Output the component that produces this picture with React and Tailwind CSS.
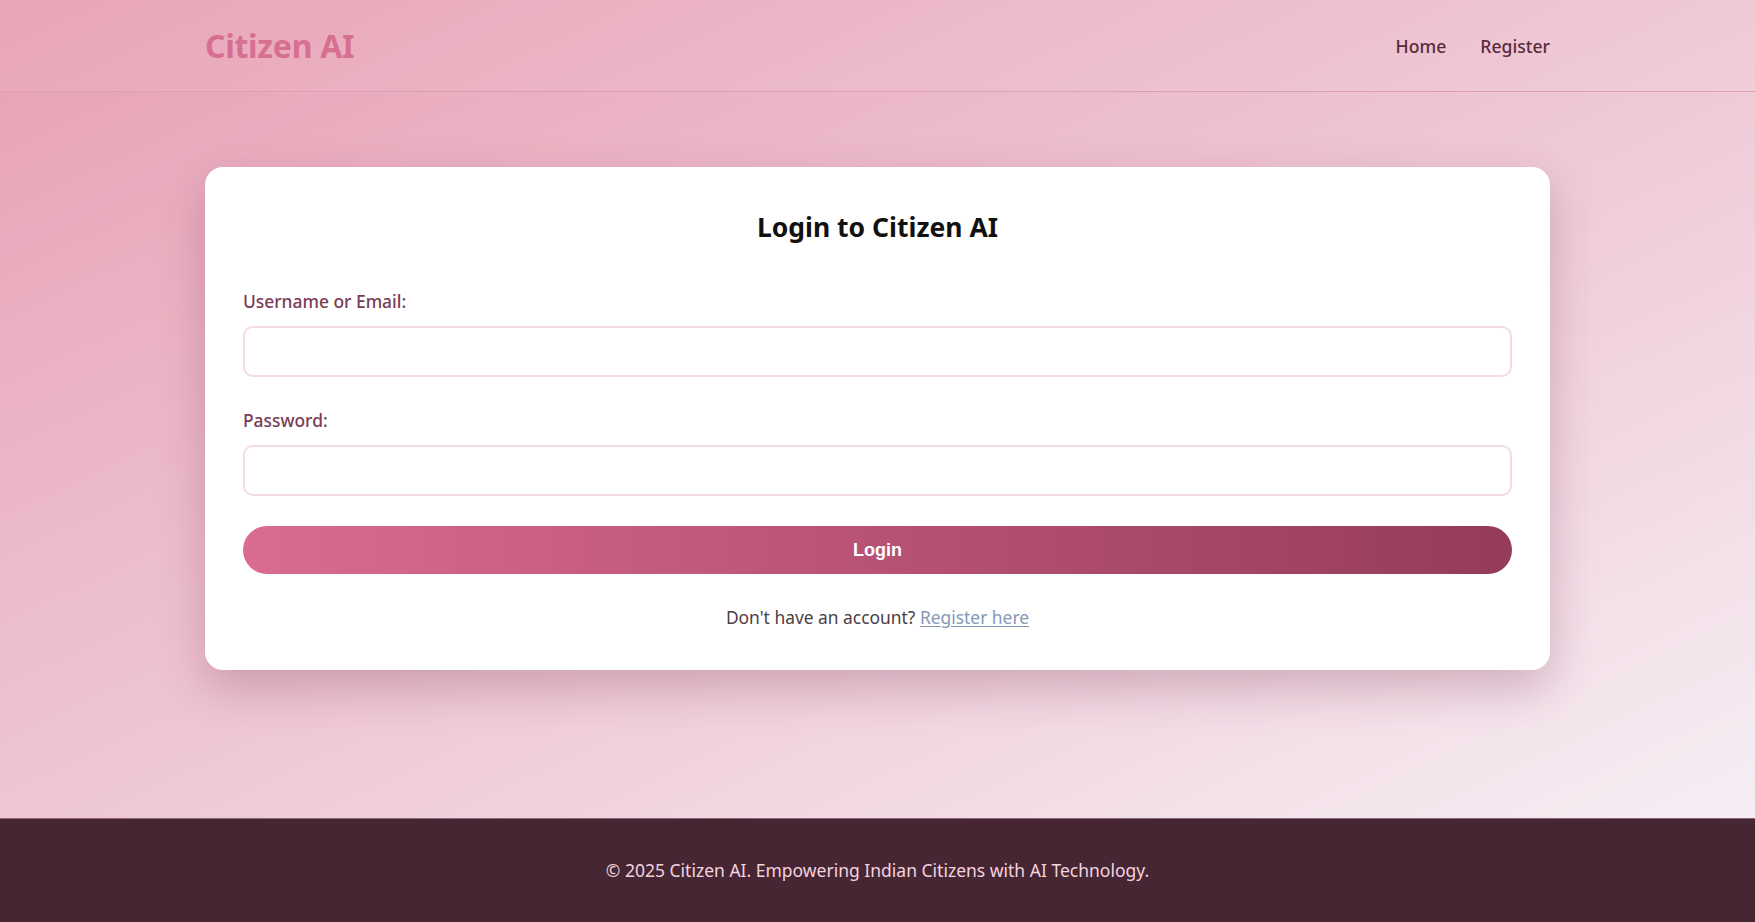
import React from "react";

const font = { fontFamily: '"Noto Sans", "Open Sans", sans-serif' };

const Header = () => (
  <header className="h-[92px] border-b border-[#dc9fb4] bg-white/5">
    <div className="w-[1345px] mx-auto h-full flex items-center justify-between">
      <div className="text-[32px] font-bold text-[#d76f91] tracking-[-0.3px]">
        Citizen AI
      </div>
      <nav className="flex items-center gap-[34px] text-[17.6px] font-medium text-[#5a2a3d] pt-[1px]">
        <a href="#">Home</a>
        <a href="#">Register</a>
      </nav>
    </div>
  </header>
);

const Field = ({ label, type, last }) => (
  <div className={last ? "mb-[30px]" : "mb-[31px]"}>
    <label className="block text-[17.4px] leading-[25px] font-medium text-[#7a3b56] mb-[12px]">
      {label}
    </label>
    <input
      type={type}
      className="block w-full h-[51px] rounded-[10px] border-2 border-[#f3dbe4] bg-white px-4 outline-none"
    />
  </div>
);

const LoginCard = () => (
  <div className="w-[1345px] mx-auto bg-white rounded-[18px] pt-[38px] px-[38px] pb-[40px] shadow-[0_18px_45px_rgba(120,45,75,0.28)]">
    <h2 className="text-center text-[26.5px] leading-[44px] font-bold text-[#111] mb-[40px]">
      Login to Citizen AI
    </h2>
    <Field label="Username or Email:" type="text" />
    <Field label="Password:" type="password" last />
    <button
      className="w-full h-[48px] rounded-full bg-gradient-to-r from-[#da6b91] to-[#953b5b] text-white text-[18px] font-bold"
      style={{ fontFamily: '"Liberation Sans", Arial, sans-serif' }}
    >
      Login
    </button>
    <p className="mt-[31px] text-center text-[17.4px] leading-[25px] text-[#4a4045]">
      Don't have an account?{" "}
      <a href="#" className="text-[#8499b6] underline underline-offset-2">
        Register here
      </a>
    </p>
  </div>
);

export default function App() {
  return (
    <div className="min-h-screen flex flex-col" style={font}>
      <div className="flex-1 bg-gradient-to-br from-[#e7a0b4] via-[#eec6d4] to-[#f6eef4]">
        <Header />
        <main className="pt-[75px] pb-[148px]">
          <LoginCard />
        </main>
      </div>
      <footer className="h-[104px] bg-[#472634] border-t border-[#8a6676] flex items-center justify-center">
        <p className="text-[17.5px] text-[#f3d3df]">
          © 2025 Citizen AI. Empowering Indian Citizens with AI Technology.
        </p>
      </footer>
    </div>
  );
}
